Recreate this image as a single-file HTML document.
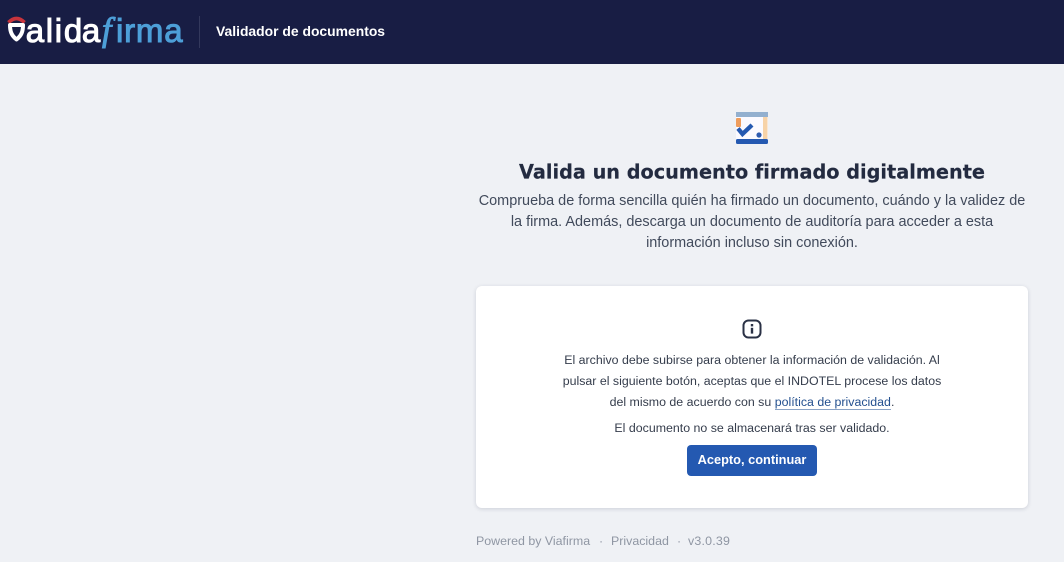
<!DOCTYPE html>
<html lang="es"><head><meta charset="utf-8"><title>Validador de documentos</title>
<style>
html,body{margin:0;padding:0;width:1064px;height:562px;overflow:hidden;background:#eff1f5;font-family:"Liberation Sans",sans-serif}
.t{position:absolute;white-space:nowrap;text-align:center}
header{position:absolute;left:0;top:0;width:1064px;height:64px;background:#181d44}
.card{position:absolute;left:476px;top:286px;width:552px;height:222px;background:#fff;border-radius:6px;box-shadow:0 1px 4px rgba(30,40,70,.16)}
.p{font-size:14.45px;color:#414a5b;left:476px;width:552px}
.s{font-size:12.38px;color:#353d4c;left:476px;width:552px}
.f{font-size:12.4px;color:#8f96a3;top:534px}
.l{position:absolute;white-space:nowrap;top:12px;font-size:33px;line-height:38px;-webkit-text-stroke:1px currentColor}
</style></head><body>
<header>
<svg style="position:absolute;left:7px;top:16px" width="19" height="28" viewBox="0 0 19 28">
<path d="M1.500 6.500C4.500 3.500 7 2.500 9.500 2.500s5 1 8 4" fill="none" stroke="#c8343c" stroke-width="3.800"/>
<path d="M3 9h13c0 6.500-1.500 10.500-6.500 14.500C4.500 19.500 3 15.500 3 9z" fill="none" stroke="#fff" stroke-width="4" stroke-linejoin="round"/>
</svg>
<div class="l" style="left:25.700px;color:#fff"><span style="letter-spacing:1.700px">ali</span><span style="letter-spacing:-.3px">d</span>a</div>
<div class="l" style="left:102px;color:#4d9fd8;font-family:'Liberation Serif',serif;font-style:italic;font-size:34px">f</div>
<div class="l" style="left:116px;color:#4d9fd8;letter-spacing:.8px">irma</div>
<div style="position:absolute;left:199px;top:16px;width:1px;height:32px;background:#33385c"></div>
<div class="t" style="left:216px;top:22px;font-size:13.9px;line-height:18px;font-weight:700;color:#fff">Validador de documentos</div>
</header>
<svg style="position:absolute;left:735px;top:111px" width="34" height="34" viewBox="0 0 34 34">
<rect x="1" y="1" width="32" height="31" fill="#fbfaff"/>
<rect x="1" y="1" width="32" height="5" fill="#93b0cf"/>
<rect x="1" y="7" width="5" height="9" rx="1" fill="#ef9d5c"/>
<rect x="28" y="6" width="4.500" height="22" fill="#f7d3a8"/>
<rect x="1" y="28" width="32" height="5" rx="1.500" fill="#2459b1"/>
<path d="M3 17.500l4.500 5.500 9.500-9" fill="none" stroke="#2459b1" stroke-width="4.300"/>
<circle cx="24" cy="24" r="2.600" fill="#2f5cb0"/>
</svg>
<svg style="position:absolute;left:476px;top:155px" width="552" height="34" viewBox="0 0 552 34"><text x="43" y="23.500" textLength="466" lengthAdjust="spacingAndGlyphs" font-family="'DejaVu Sans',sans-serif" font-weight="700" font-size="19.500" fill="#232b40" stroke="#232b40" stroke-width=".2">Valida un documento firmado digitalmente</text></svg>
<div class="t p" style="top:191.500px;line-height:18px">Comprueba de forma sencilla quién ha firmado un documento, cuándo y la validez de</div>
<div class="t p" style="top:212.500px;line-height:18px">la firma. Además, descarga un documento de auditoría para acceder a esta</div>
<div class="t p" style="top:233.500px;line-height:18px">información incluso sin conexión.</div>
<div class="card"></div>
<svg style="position:absolute;left:742px;top:319px" width="20" height="20" viewBox="0 0 20 20">
<rect x="1.500" y="1.500" width="17" height="17" rx="5" fill="none" stroke="#2a3145" stroke-width="2"/>
<rect x="8.800" y="5" width="2.400" height="2.400" fill="#2a3145"/>
<rect x="8.800" y="8.800" width="2.400" height="5.800" fill="#2a3145"/>
</svg>
<div class="t s" style="top:352px;line-height:16px">El archivo debe subirse para obtener la información de validación. Al</div>
<div class="t s" style="top:373px;line-height:16px">pulsar el siguiente botón, aceptas que el INDOTEL procese los datos</div>
<div class="t s" style="top:394px;line-height:16px">del mismo de acuerdo con su <span style="color:#24508f;border-bottom:1px solid #8aa3c6">política de privacidad</span>.</div>
<div class="t s" style="top:420px;line-height:16px">El documento no se almacenará tras ser validado.</div>
<div class="t" style="left:687px;top:445px;width:130px;height:31px;line-height:30px;background:#2459b1;border-radius:4px;color:#fff;font-size:12.800px;font-weight:700">Acepto, continuar</div>
<div class="t f" style="left:476px">Powered by Viafirma</div>
<div class="t f" style="left:599px">·</div>
<div class="t f" style="left:611px">Privacidad</div>
<div class="t f" style="left:677px">·</div>
<div class="t f" style="left:688px;letter-spacing:.2px">v3.0.39</div>
</body></html>
